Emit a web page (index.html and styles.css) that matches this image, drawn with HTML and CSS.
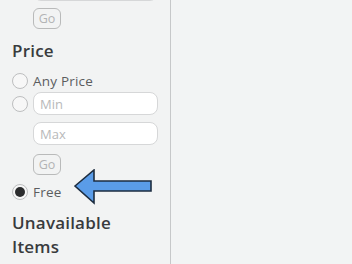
FILE: index.html
```html
<!DOCTYPE html>
<html>
<head>
<meta charset="utf-8">
<link rel="stylesheet" href="styles.css">
</head>
<body>
<div class="page">
  <aside class="sidebar">
    <div class="field-row cut"><div class="spacer"></div><input class="text-input" type="text"></div>
    <div class="field-row"><div class="spacer"></div><button class="go">Go</button></div>
    <h3 class="heading">Price</h3>
    <label class="radio-row any-row"><span class="radio"></span><span class="label">Any Price</span></label>
    <div class="field-row min-row"><span class="radio"></span><input class="text-input" type="text" placeholder="Min"></div>
    <div class="field-row max-row"><div class="spacer"></div><input class="text-input" type="text" placeholder="Max"></div>
    <div class="field-row go-row"><div class="spacer"></div><button class="go">Go</button></div>
    <label class="radio-row free-row"><span class="radio checked"></span><span class="label">Free</span></label>
    <h3 class="heading unavailable">Unavailable<br>Items</h3>
    <svg class="arrow" width="82" height="38" viewBox="0 0 82 38">
      <path d="M2 17 L21 1 L21 12 L78 12 L78 22 L21 22 L21 34 Z" fill="#5a9ce8" stroke="#1d2d40" stroke-width="1.6" stroke-linejoin="miter"/>
    </svg>
  </aside>
  <main class="content"></main>
</div>
</body>
</html>
```
FILE: styles.css
```css
html, body {
  margin: 0;
  padding: 0;
  background: #f2f4f4;
  font-family: "Open Sans", "Lato", sans-serif;
  color: #393b3d;
  overflow: hidden;
}
.page {
  display: flex;
  width: 352px;
  height: 264px;
}
.sidebar {
  position: relative;
  width: 171px;
  box-sizing: border-box;
  border-right: 1px solid #c6c8c9;
  padding-left: 12px;
  background: #f2f3f3;
}
.content {
  flex: 1;
  background: #f2f4f4;
}
.field-row {
  display: flex;
  align-items: center;
  gap: 5px;
}
.spacer {
  width: 16px;
  flex: none;
}
.cut {
  margin-top: -22px;
}
.text-input {
  width: 125px;
  height: 23px;
  box-sizing: border-box;
  border: 1px solid #d6d7d8;
  border-radius: 8px;
  background: #fff;
  padding: 0 6px;
  font-family: inherit;
  font-size: 13px;
  color: #393b3d;
  outline: none;
}
.text-input::placeholder {
  color: #b8b9ba;
}
.go {
  margin-top: 7px;
  width: 28px;
  height: 21px;
  box-sizing: border-box;
  border: 1px solid #b9baba;
  border-radius: 6px;
  background: transparent;
  color: #b3b4b5;
  font-family: inherit;
  font-size: 12.5px;
  padding: 0;
}
.heading {
  margin: 10px 0 0;
  font-size: 17px;
  font-weight: 600;
  line-height: 24px;
  letter-spacing: 0.2px;
}
.radio-row {
  display: flex;
  align-items: center;
  gap: 5px;
  height: 18px;
}
.any-row {
  margin-top: 9px;
}
.radio {
  width: 16px;
  height: 16px;
  box-sizing: border-box;
  border: 1px solid #bdbebf;
  border-radius: 50%;
  background: #f7f7f7;
  flex: none;
  display: flex;
  align-items: center;
  justify-content: center;
}
.radio.checked::after {
  content: "";
  width: 10px;
  height: 10px;
  border-radius: 50%;
  background: #2b2c2d;
}
.label {
  font-size: 13.5px;
  color: #5b5d5f;
  letter-spacing: 0.2px;
}
.min-row {
  margin-top: 2px;
}
.max-row {
  margin-top: 7px;
}
.go-row .go {
  margin-top: 9px;
}
.free-row {
  margin-top: 8px;
}
.unavailable {
  margin-top: 10px;
}
.arrow {
  position: absolute;
  left: 73px;
  top: 169px;
}
```
